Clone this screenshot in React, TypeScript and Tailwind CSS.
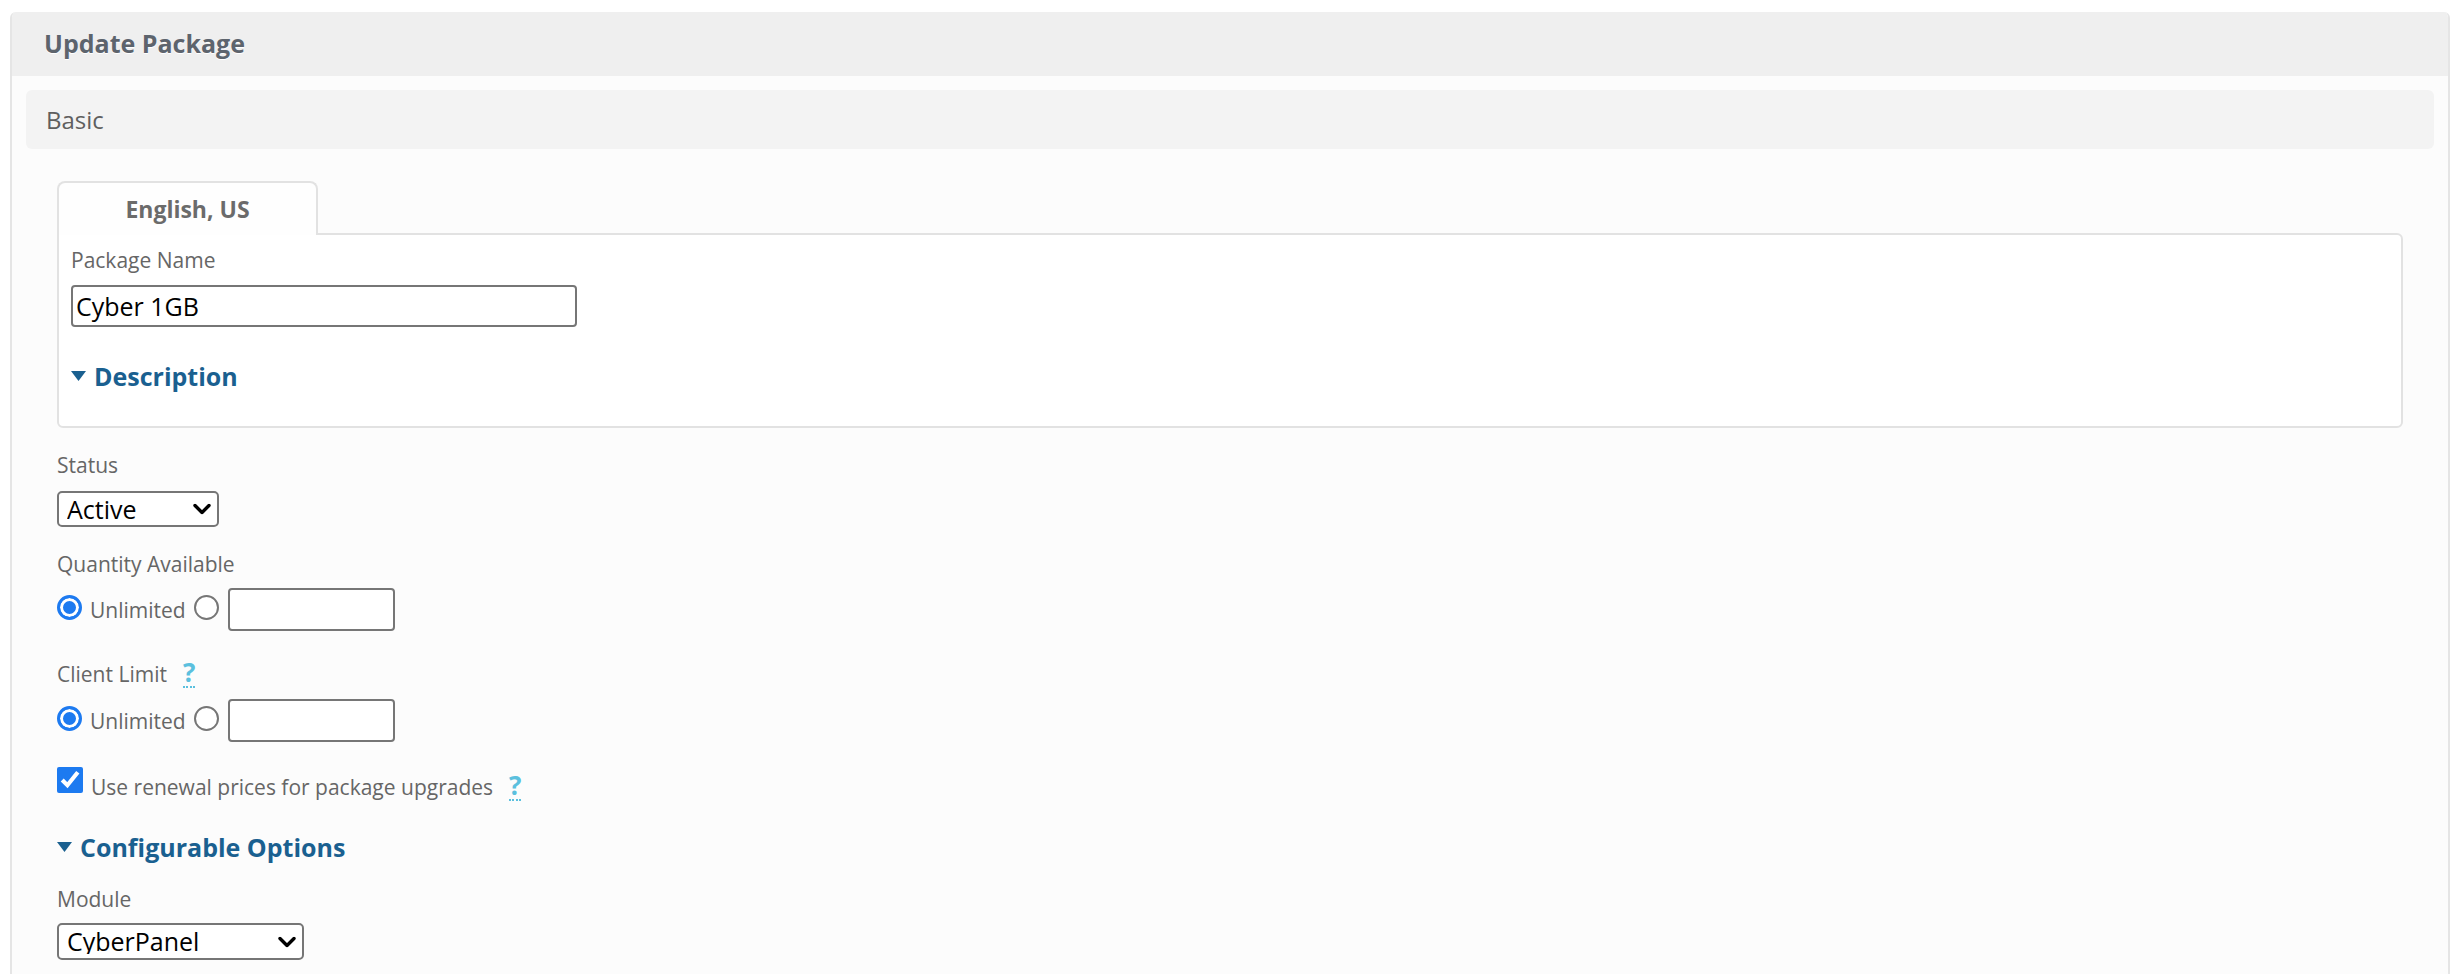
import React from 'react';

function Help({ className = '' }: { className?: string }) {
  return (
    <span
      className={`inline-block text-[26px] font-bold leading-[28px] text-[#5bc0de] border-b-2 border-dotted border-[#5bc0de] cursor-help ${className}`}
    >
      ?
    </span>
  );
}

function Caret() {
  return (
    <svg width="15" height="10" viewBox="0 0 15 10" className="shrink-0">
      <path d="M0 0 H15 L7.5 10 Z" fill="#1a6090" />
    </svg>
  );
}

function Chevron() {
  return (
    <svg width="18" height="11" viewBox="0 0 18 11" className="pointer-events-none absolute right-[8px] top-1/2 -translate-y-1/2">
      <path d="M2 2 L9 9 L16 2" fill="none" stroke="#000" strokeWidth="3.4" strokeLinecap="round" strokeLinejoin="round" />
    </svg>
  );
}

function Select({ value, options, width }: { value: string; options: string[]; width: string }) {
  return (
    <div className={`relative ${width}`}>
      <select
        defaultValue={value}
        className="block w-full h-full appearance-none bg-white border-2 border-[#767676] rounded-[5px] pl-[8px] pr-[30px] text-[25px] leading-none text-black outline-none"
      >
        {options.map((o) => (
          <option key={o}>{o}</option>
        ))}
      </select>
      <Chevron />
    </div>
  );
}

function Label({ children }: { children: React.ReactNode }) {
  return <div className="text-[21px] leading-[28px] h-[28px] text-[#666]">{children}</div>;
}

const radioCls =
  'm-0 w-[25px] h-[25px] shrink-0 appearance-none rounded-full bg-white border-2 border-[#767676] checked:border-[3px] checked:border-[#1d7af0] checked:bg-[#1d7af0] checked:shadow-[inset_0_0_0_3px_#fff]';

function LimitRow({ name }: { name: string }) {
  return (
    <div className="flex items-center h-[43px]">
      <input type="radio" name={name} defaultChecked className={`${radioCls} mb-[4px]`} />
      <span className="ml-[8px] text-[21px] leading-[28px] text-[#666]">Unlimited</span>
      <input type="radio" name={name} className={`${radioCls} ml-[8px] mb-[4px]`} />
      <input
        type="text"
        className="ml-[9px] w-[167px] h-[43px] bg-white border-2 border-[#767676] rounded-[4px] px-[3px] text-[25px] outline-none"
      />
    </div>
  );
}

export default function App() {
  return (
    <div className="min-h-screen bg-white pt-[12px] px-[10px] font-['Open_Sans',sans-serif]">
      <div className="min-h-[1000px] bg-[#fcfcfc] border-x-2 border-[#e5e5e5] rounded-t-[6px] overflow-hidden">
        {/* panel heading */}
        <div className="h-[64px] bg-[#efefef] flex items-center pl-[32px]">
          <h1 className="text-[25px] font-bold text-[#5d646d] [text-shadow:0_1px_0_#fff]">Update Package</h1>
        </div>

        <div className="px-[14px] pt-[14px] pb-[40px]">
          <div className="h-[59px] rounded-[6px] bg-[#f3f3f3] flex items-center pl-[20px]">
            <span className="text-[24px] text-[#5f5f5f]">Basic</span>
          </div>

          <div className="px-[31px] pt-[32px]">
            {/* language tab */}
            <div className="relative z-10 -mb-[2px] w-[261px] h-[54px] bg-[#fefefe] border-2 border-b-0 border-[#e2e2e2] rounded-t-[8px] flex items-center justify-center">
              <span className="text-[23px] font-bold text-[#6b6b6b]">English, US</span>
            </div>
            <div className="bg-white border-2 border-[#e2e2e2] rounded-b-[6px] rounded-tr-[6px] pl-[12px] pt-[11px] pb-[33px]">
              <Label>Package Name</Label>
              <input
                type="text"
                defaultValue="Cyber 1GB"
                className="mt-[11px] block w-[506px] h-[42px] bg-white border-2 border-[#767676] rounded-[4px] px-[3px] text-[25px] text-black outline-none"
              />
              <div className="mt-[32px] flex items-center gap-[8px] h-[34px]">
                <Caret />
                <span className="text-[25px] font-bold leading-[34px] text-[#1a6090]">Description</span>
              </div>
            </div>

            <div className="mt-[23px]">
              <Label>Status</Label>
              <div className="mt-[12px]">
                <Select value="Active" options={['Active', 'Inactive', 'Restricted']} width="w-[162px] h-[36px]" />
              </div>
            </div>

            <div className="mt-[23px]">
              <Label>Quantity Available</Label>
              <div className="mt-[10px]">
                <LimitRow name="qty" />
              </div>
            </div>

            <div className="mt-[27px]">
              <div className="flex items-baseline h-[28px] text-[21px] leading-[28px] text-[#666]">
                <span>Client Limit</span>
                <Help className="ml-[16px]" />
              </div>
              <div className="mt-[13px]">
                <LimitRow name="client" />
              </div>
            </div>

            <div className="mt-[25px] flex items-start h-[36px]">
              <input type="checkbox" defaultChecked className="m-0 w-[26px] h-[26px] accent-[#1d7af0]" />
              <div className="ml-[8px] mt-[4px] flex items-baseline text-[21px] leading-[28px] text-[#666]">
                <span>Use renewal prices for package upgrades</span>
                <Help className="ml-[16px]" />
              </div>
            </div>

            <div className="mt-[27px] flex items-center gap-[8px] h-[34px]">
              <Caret />
              <span className="text-[25px] font-bold leading-[34px] text-[#1a6090]">Configurable Options</span>
            </div>

            <div className="mt-[21px]">
              <Label>Module</Label>
              <div className="mt-[10px]">
                <Select value="CyberPanel" options={['None', 'CyberPanel', 'cPanel']} width="w-[247px] h-[37px]" />
              </div>
            </div>
          </div>
        </div>
      </div>
    </div>
  );
}
